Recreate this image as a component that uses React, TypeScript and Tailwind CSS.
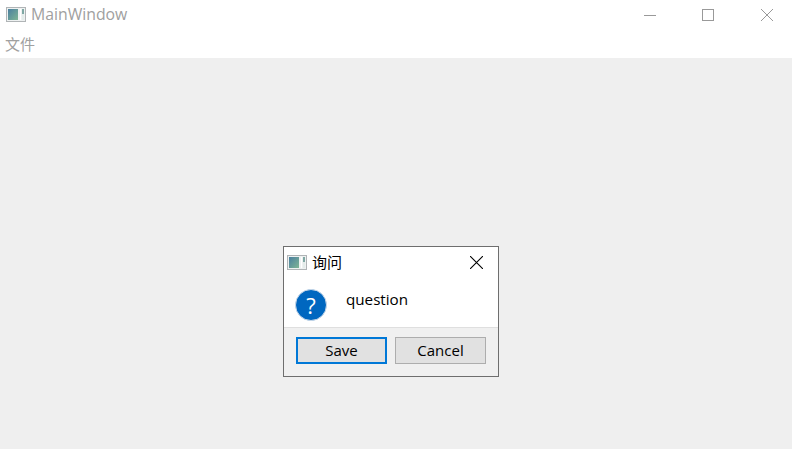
function AppIcon() {
  return (
    <svg width="20" height="15" viewBox="0 0 20 15" className="shrink-0">
      <defs>
        <linearGradient id="pane" x1="0" y1="0" x2="1" y2="1">
          <stop offset="0" stopColor="#4a7f9f" />
          <stop offset="1" stopColor="#7fb595" />
        </linearGradient>
      </defs>
      <rect x="0.5" y="0.5" width="19" height="14" fill="#eef1f1" stroke="#b0b4b6" />
      <rect x="2" y="2" width="10" height="11" fill="url(#pane)" />
      <rect x="14" y="2" width="1" height="11" fill="#ffffff" />
      <rect x="16" y="2" width="2" height="5" fill="#7fa8a4" />
      <rect x="16" y="7" width="2" height="6" fill="#e4ecea" />
    </svg>
  );
}

function QuestionIcon() {
  return (
    <div className="flex h-8 w-8 items-center justify-center rounded-full border border-[#c9d8e8] bg-[#0067c0] text-[22px] leading-none text-white">
      ?
    </div>
  );
}

function CloseGlyph({ color, size }: { color: string; size: number }) {
  return (
    <svg width={size} height={size} viewBox="0 0 12 12">
      <path d="M0 0L12 12M12 0L0 12" stroke={color} strokeWidth="1" fill="none" />
    </svg>
  );
}

export default function App() {
  return (
    <div className="relative flex h-[449px] w-[792px] flex-col overflow-hidden bg-[#efefef] font-['Open_Sans','Noto_Sans_CJK_SC',sans-serif]">
      <header className="flex h-[30px] shrink-0 items-center bg-white">
        <div className="ml-[6px] flex items-center gap-[5px]">
          <AppIcon />
          <span className="text-[15.8px] leading-none text-[#a0a0a0]">MainWindow</span>
        </div>
        <div className="ml-auto mr-[19px] flex items-center gap-[46px]">
          <div className="h-px w-3 bg-[#999999]" />
          <div className="h-3 w-3 border border-[#999999]" />
          <div className="ml-px">
            <CloseGlyph color="#999999" size={12} />
          </div>
        </div>
      </header>
      <nav className="flex h-[28px] shrink-0 items-center bg-white px-[5px] text-[15px] leading-none text-[#a0a0a0]">
        文件
      </nav>
      <main className="flex-1" />

      <div className="absolute left-[283px] top-[246px] flex h-[131px] w-[216px] flex-col border border-[#6e6e6e] bg-[#f0f0f0]">
        <div className="h-[80px] bg-white">
          <div className="flex h-[30px] items-center pl-[3px] pr-[15px]">
            <AppIcon />
            <span className="ml-[5px] text-[15px] leading-none text-black">询问</span>
            <div className="ml-auto">
              <CloseGlyph color="#000000" size={13} />
            </div>
          </div>
          <div className="flex items-start pl-[11px] pt-[12px]">
            <QuestionIcon />
            <span className="ml-[19px] text-[15.2px] leading-[20px] text-black">question</span>
          </div>
        </div>
        <div className="flex flex-1 items-start gap-2 border-t border-[#dfdfdf] px-3 pt-[9px]">
          <button className="h-[27px] w-[91px] border-2 border-[#0078d7] bg-[#e1e1e1] text-[15px] leading-none text-black">
            Save
          </button>
          <button className="h-[27px] w-[91px] border border-[#adadad] bg-[#e1e1e1] text-[15px] leading-none text-black">
            Cancel
          </button>
        </div>
      </div>
    </div>
  );
}
